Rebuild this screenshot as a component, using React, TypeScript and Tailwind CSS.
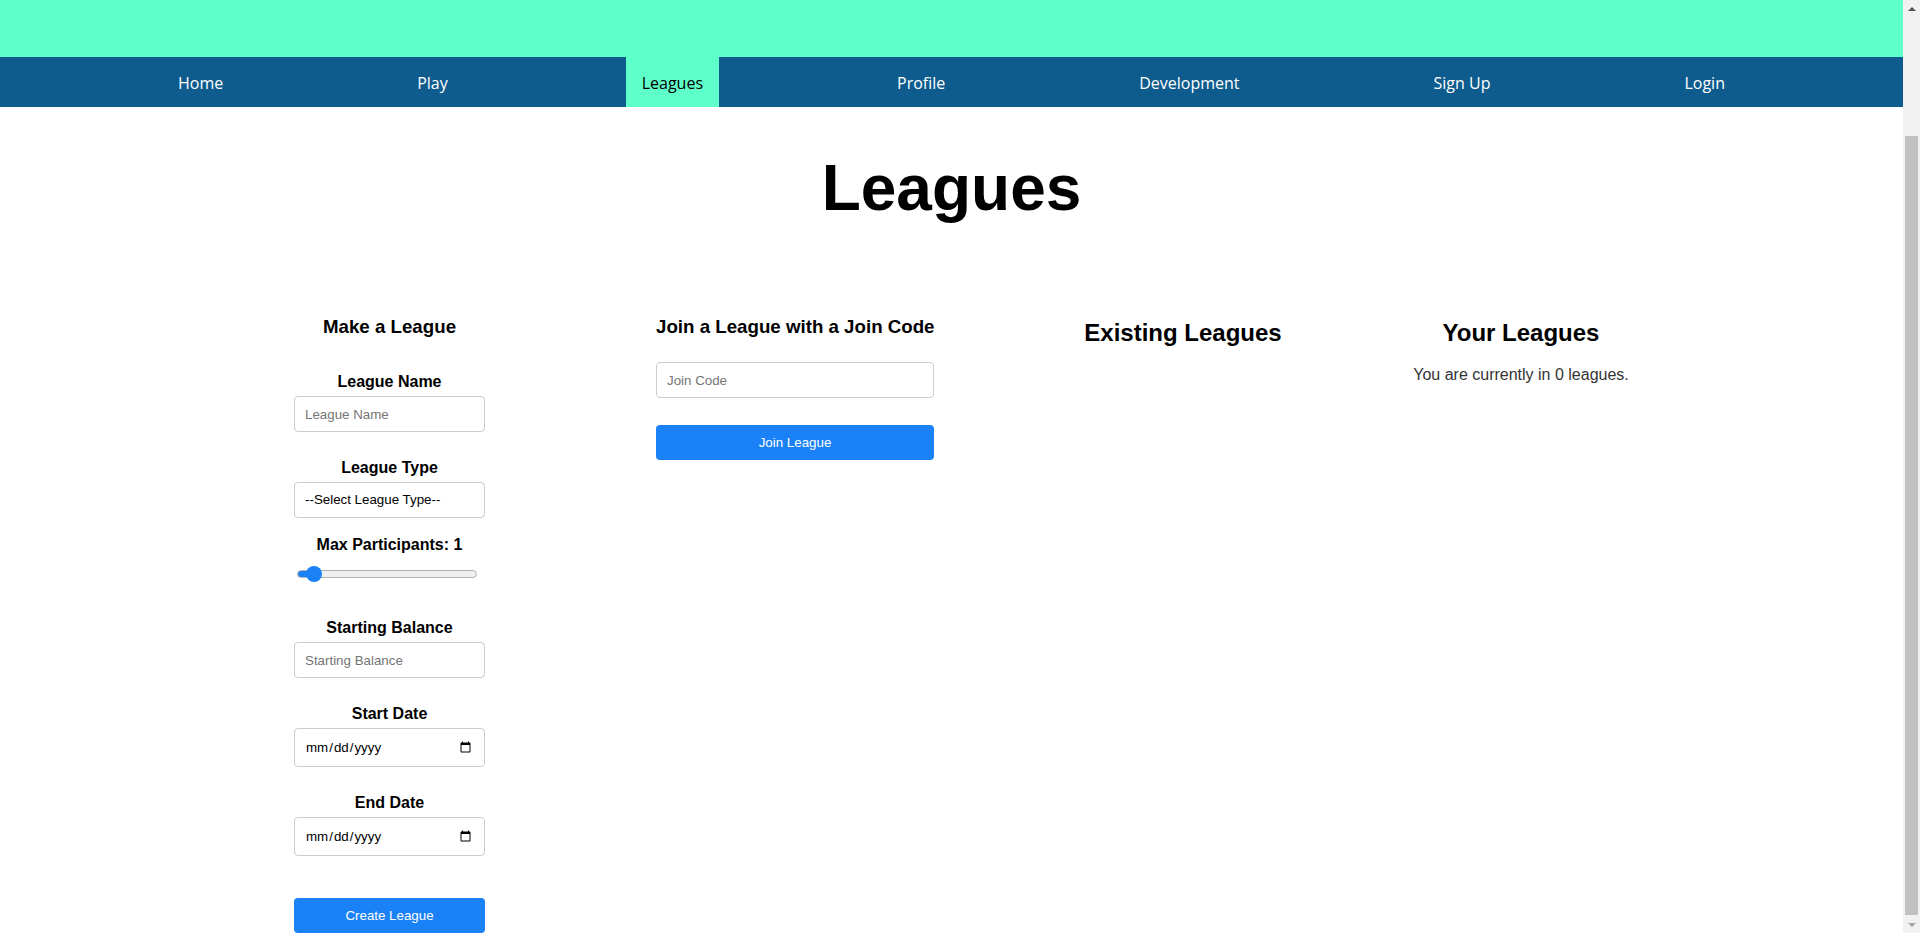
import { useState } from 'react';

const navItems = ['Home', 'Play', 'Leagues', 'Profile', 'Development', 'Sign Up', 'Login'];

const inputClass =
  'block w-full h-[36px] px-[10px] rounded-[4px] border border-[#cccccc] bg-white text-[13.33px] text-black placeholder:text-[#757575] outline-none';

function Label({ children, className = '' }: { children: React.ReactNode; className?: string }) {
  return (
    <label className={`block text-center text-[16px] leading-[18px] font-bold text-black ${className}`}>
      {children}
    </label>
  );
}

function FakeScrollbar() {
  return (
    <div className="w-[17px] h-[933px] bg-[#f1f1f1] flex flex-col shrink-0">
      <div className="h-[17px] flex items-center justify-center">
        <div className="w-0 h-0 border-l-[4px] border-r-[4px] border-b-[4px] border-l-transparent border-r-transparent border-b-[#505050]" />
      </div>
      <div className="flex-1">
        <div className="mt-[119px] h-[779px] mx-[2px] bg-[#c1c1c1]" />
      </div>
      <div className="h-[17px] flex items-center justify-center">
        <div className="w-0 h-0 border-l-[4px] border-r-[4px] border-t-[4px] border-l-transparent border-r-transparent border-t-[#a3a3a3]" />
      </div>
    </div>
  );
}

export default function App() {
  const [leagueName, setLeagueName] = useState('');
  const [leagueType, setLeagueType] = useState('');
  const [maxParticipants, setMaxParticipants] = useState(1);
  const [startingBalance, setStartingBalance] = useState('');
  const [joinCode, setJoinCode] = useState('');

  // slider fill: thumb is 16px wide inside a 180px track
  const fillPx = 8 + ((180 - 16) * maxParticipants) / 20;

  return (
    <div className="flex h-[933px] overflow-hidden bg-white font-['Liberation_Sans',Arial,sans-serif]">
      <div className="flex-1 min-w-0">
        {/* Header */}
        <div className="h-[57px] bg-[#5fffca]" />
        <nav className="h-[50px] bg-[#0e5c8e] flex justify-evenly items-stretch font-['Open_Sans',sans-serif] text-[16px]">
          {navItems.map((item) => (
            <a
              key={item}
              href="#"
              className={`flex items-center px-[16px] pt-[2px] ${
                item === 'Leagues' ? 'bg-[#5fffca] text-black' : 'text-white'
              }`}
            >
              {item}
            </a>
          ))}
        </nav>

        {/* Title */}
        <h1 className="mt-[44px] text-center text-[64px] leading-[74px] font-bold text-black">Leagues</h1>

        {/* Columns */}
        <div className="mt-[91px] flex items-start pl-[294px]">
          {/* Make a League */}
          <div className="w-[191px]">
            <h3 className="text-center text-[18.72px] leading-[22px] font-bold text-black">Make a League</h3>

            <Label className="mt-[35px]">League Name</Label>
            <input
              className={`${inputClass} mt-[5px]`}
              placeholder="League Name"
              value={leagueName}
              onChange={(e) => setLeagueName(e.target.value)}
            />

            <Label className="mt-[27px]">League Type</Label>
            <select
              className={`${inputClass} mt-[5px] appearance-none`}
              value={leagueType}
              onChange={(e) => setLeagueType(e.target.value)}
            >
              <option value="">--Select League Type--</option>
              <option value="public">Public</option>
              <option value="private">Private</option>
            </select>

            <Label className="mt-[18px]">Max Participants: {maxParticipants}</Label>
            <div className="mt-[12px] h-[16px] flex items-center">
              <input
                type="range"
                min={0}
                max={20}
                value={maxParticipants}
                onChange={(e) => setMaxParticipants(Math.max(1, Number(e.target.value)))}
                style={{
                  background: `linear-gradient(to right, #1a82f6 0px, #1a82f6 ${fillPx}px, #efefef ${fillPx}px, #efefef 100%)`,
                }}
                className="block ml-[3px] w-[180px] h-[8px] appearance-none rounded-full border border-[#b2b2b2] outline-none [&::-webkit-slider-thumb]:appearance-none [&::-webkit-slider-thumb]:w-[16px] [&::-webkit-slider-thumb]:h-[16px] [&::-webkit-slider-thumb]:rounded-full [&::-webkit-slider-thumb]:bg-[#1a82f6] [&::-webkit-slider-thumb]:border-0"
              />
            </div>

            <Label className="mt-[37px]">Starting Balance</Label>
            <input
              className={`${inputClass} mt-[5px]`}
              placeholder="Starting Balance"
              value={startingBalance}
              onChange={(e) => setStartingBalance(e.target.value)}
            />

            <Label className="mt-[27px]">Start Date</Label>
            <input type="date" className={`${inputClass} !h-[39px] mt-[5px]`} />

            <Label className="mt-[27px]">End Date</Label>
            <input type="date" className={`${inputClass} !h-[39px] mt-[5px]`} />

            <button className="mt-[42px] w-full h-[35px] rounded-[4px] bg-[#1a82f6] text-white text-[13.33px]">
              Create League
            </button>
          </div>

          {/* Join a League */}
          <div className="ml-[171px] w-[278px]">
            <h3 className="text-center text-[18.72px] leading-[22px] font-bold text-black whitespace-nowrap">
              Join a League with a Join Code
            </h3>
            <input
              className={`${inputClass} mt-[24px]`}
              placeholder="Join Code"
              value={joinCode}
              onChange={(e) => setJoinCode(e.target.value)}
            />
            <button className="mt-[27px] w-full h-[35px] rounded-[4px] bg-[#1a82f6] text-white text-[13.33px]">
              Join League
            </button>
          </div>

          {/* Existing Leagues */}
          <div className="ml-[99px] w-[300px] pt-[3px]">
            <h2 className="text-center text-[24px] leading-[28px] font-bold text-black">Existing Leagues</h2>
          </div>

          {/* Your Leagues */}
          <div className="ml-[38px] w-[300px] pt-[3px]">
            <h2 className="text-center text-[24px] leading-[28px] font-bold text-black">Your Leagues</h2>
            <p className="mt-[19px] text-center text-[16px] leading-[18px] text-[#333333]">
              You are currently in 0 leagues.
            </p>
          </div>
        </div>
      </div>
      <FakeScrollbar />
    </div>
  );
}
